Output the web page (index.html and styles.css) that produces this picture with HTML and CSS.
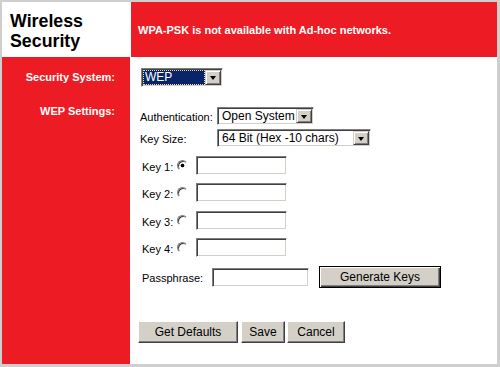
FILE: index.html
```html
<!DOCTYPE html>
<html>
<head>
<meta charset="utf-8">
<link rel="stylesheet" href="styles.css">
</head>
<body>
<div class="frame">
  <div class="title">Wireless<br>Security</div>
  <div class="msg">WPA-PSK is not available with Ad-hoc networks.</div>

  <div class="side side-sys">Security System:</div>
  <div class="sys">
    <span class="sel sel-wep">
      <select class="focused"><option>WEP</option></select>
      <span class="arrow"></span>
    </span>
  </div>

  <div class="side side-wep">WEP Settings:</div>
  <div class="settings">
    <div class="row">
      <span class="lab">Authentication:</span>
      <span class="sel sel-auth">
        <select><option>Open System</option></select>
        <span class="arrow"></span>
      </span>
    </div>
    <div class="row row-size">
      <span class="lab">Key Size:</span>
      <span class="sel sel-size">
        <select><option>64 Bit (Hex -10 chars)</option></select>
        <span class="arrow"></span>
      </span>
    </div>

    <div class="key k1">
      <span class="klab">Key 1:</span>
      <input type="radio" name="k" class="radio" checked>
      <input type="text" class="field fkey">
    </div>
    <div class="key k2">
      <span class="klab">Key 2:</span>
      <input type="radio" name="k" class="radio">
      <input type="text" class="field fkey">
    </div>
    <div class="key k3">
      <span class="klab">Key 3:</span>
      <input type="radio" name="k" class="radio">
      <input type="text" class="field fkey">
    </div>
    <div class="key k4">
      <span class="klab">Key 4:</span>
      <input type="radio" name="k" class="radio">
      <input type="text" class="field fkey">
    </div>

    <div class="pass">
      <span class="plab">Passphrase:</span>
      <input type="text" class="field fpass">
      <button class="btn btn-default">Generate Keys</button>
    </div>

    <div class="actions">
      <button class="btn b-def">Get Defaults</button>
      <button class="btn b-save">Save</button>
      <button class="btn b-cancel">Cancel</button>
    </div>
  </div>
</div>
</body>
</html>
```

FILE: styles.css
```css
html, body {
  height: 100%;
}
body {
  margin: 0;
  box-sizing: border-box;
  padding: 2px 3px 3px 2px;
  background: #cfcfcf;
  font-family: "Liberation Sans", Arial, sans-serif;
}
.frame {
  height: 100%;
  background: #fff;
  display: grid;
  grid-template-columns: 128px 1fr;
  grid-template-rows: 55px 39px 1fr;
  column-gap: 1px;
}
.title {
  padding: 9px 0 0 8px;
  font-size: 17.8px;
  line-height: 20px;
  font-weight: bold;
  color: #000;
}
.msg {
  background: #ed1c24;
  color: #fff;
  font-size: 11px;
  font-weight: bold;
  display: flex;
  align-items: center;
  padding-left: 7px;
  padding-top: 1px;
}
.side {
  background: #ed1c24;
  color: #fff;
  font-size: 11px;
  font-weight: bold;
  text-align: right;
  padding-right: 15px;
  line-height: 13px;
}
.side-sys {
  display: flex;
  align-items: center;
  justify-content: flex-end;
  padding-top: 1px;
}
.side-wep {
  padding-top: 9px;
}
.sys {
  padding: 10px 0 0 10px;
}
.settings {
  padding: 11px 0 0 9px;
  font-size: 11px;
  color: #000;
}

/* select imitation */
.sel {
  display: inline-flex;
  box-sizing: border-box;
  border: 1px solid;
  border-color: #808080 #fff #fff #808080;
  box-shadow: inset 1px 1px 0 #404040, inset -1px -1px 0 #d4d0c8;
  padding: 1px;
  background: #fff;
}
.sel select {
  appearance: none;
  -webkit-appearance: none;
  border: none;
  margin: 0;
  padding: 0 0 0 3px;
  background: #fff;
  color: #000;
  font-family: "Liberation Sans", Arial, sans-serif;
  font-size: 12px;
  flex: 1;
  min-width: 0;
  height: 100%;
  outline: none;
}
.sel select.focused {
  padding-left: 2px;
  background: #0a246a;
  color: #fff;
  outline: 1px dotted #e8e0a0;
  outline-offset: -1px;
}
.arrow {
  width: 16px;
  flex: none;
  box-sizing: border-box;
  background: #d4d0c8;
  border: 1px solid;
  border-color: #d4d0c8 #404040 #404040 #d4d0c8;
  box-shadow: inset 1px 1px 0 #fff, inset -1px -1px 0 #808080;
  display: flex;
  align-items: center;
  justify-content: center;
}
.arrow::after {
  content: "";
  width: 0;
  height: 0;
  border-left: 3.5px solid transparent;
  border-right: 3.5px solid transparent;
  border-top: 4px solid #000;
  margin-top: 1px;
}
.sel-wep {
  width: 82px;
  height: 19px;
}
.sel-auth {
  width: 97px;
  height: 18px;
}
.sel-size {
  width: 154px;
  height: 18px;
}

.row {
  display: flex;
  align-items: center;
  height: 18px;
}
.row-size {
  margin-top: 4px;
}
.lab {
  width: 77px;
  padding-top: 1px;
}

.key {
  display: flex;
  align-items: center;
  height: 19px;
  padding-left: 2px;
  margin-top: 8px;
}
.k1 { margin-top: 9px; }
.k3 { margin-top: 9px; }
.klab {
  width: 35px;
  padding-top: 2px;
}
.radio {
  appearance: none;
  -webkit-appearance: none;
  box-sizing: border-box;
  width: 11px;
  height: 11px;
  margin: 0 8px 0 0;
  border-radius: 50%;
  border: 1px solid;
  border-color: #808080 #fff #fff #808080;
  box-shadow: inset 1px 1px 0 #404040;
  background: #fff;
}
.radio:checked {
  background: radial-gradient(circle, #000 0 1.6px, #fff 2.2px);
}

.field {
  box-sizing: border-box;
  height: 19px;
  margin: 0;
  padding: 0 2px;
  border: 1px solid;
  border-color: #808080 #fff #fff #808080;
  box-shadow: inset 1px 1px 0 #404040, inset -1px -1px 0 #d4d0c8;
  background: #fff;
  font-family: "Liberation Sans", Arial, sans-serif;
  font-size: 12px;
  outline: none;
}
.fkey {
  width: 91px;
}
.pass {
  display: flex;
  align-items: center;
  height: 22px;
  padding-left: 2px;
  margin-top: 9px;
}
.plab {
  width: 70px;
  padding-top: 1px;
}
.fpass {
  width: 97px;
  margin-right: 10px;
}

.btn {
  box-sizing: border-box;
  height: 22px;
  margin: 0;
  padding: 0;
  background: #d4d0c8;
  color: #000;
  font-family: "Liberation Sans", Arial, sans-serif;
  font-size: 12px;
  border: 1px solid;
  border-color: #fff #404040 #404040 #fff;
  box-shadow: inset -1px -1px 0 #808080;
}
.btn-default {
  width: 122px;
  border-color: #000;
  box-shadow: inset 1px 1px 0 #fff, inset -1px -1px 0 #404040, inset -2px -2px 0 #808080;
}
.actions {
  display: flex;
  margin-top: 33px;
  margin-left: -2px;
}
.b-def { width: 100px; margin-right: 3px; }
.b-save { width: 44px; margin-right: 2px; }
.b-cancel { width: 58px; }
```
